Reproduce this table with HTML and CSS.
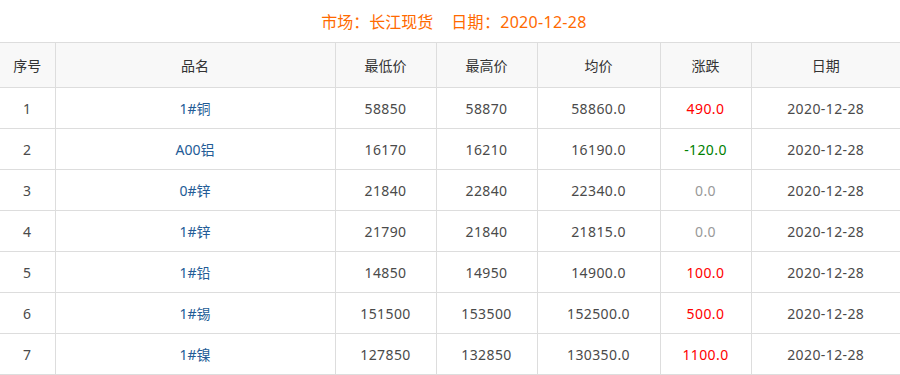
FILE: index.html
```html
<!DOCTYPE html>
<html lang="zh-CN">
<head>
<meta charset="utf-8">
<link rel="stylesheet" href="styles.css">
</head>
<body>
<div class="title"><span class="market">市场：长江现货</span><span class="date">日期：2020-12-28</span></div>
<table class="price-table">
  <colgroup>
    <col class="c1"><col class="c2"><col class="c3"><col class="c4"><col class="c5"><col class="c6"><col class="c7">
  </colgroup>
  <thead>
    <tr><th>序号</th><th>品名</th><th>最低价</th><th>最高价</th><th>均价</th><th>涨跌</th><th>日期</th></tr>
  </thead>
  <tbody>
    <tr><td>1</td><td class="name">1#铜</td><td>58850</td><td>58870</td><td>58860.0</td><td class="up">490.0</td><td>2020-12-28</td></tr>
    <tr><td>2</td><td class="name">A00铝</td><td>16170</td><td>16210</td><td>16190.0</td><td class="down">-120.0</td><td>2020-12-28</td></tr>
    <tr><td>3</td><td class="name">0#锌</td><td>21840</td><td>22840</td><td>22340.0</td><td class="flat">0.0</td><td>2020-12-28</td></tr>
    <tr><td>4</td><td class="name">1#锌</td><td>21790</td><td>21840</td><td>21815.0</td><td class="flat">0.0</td><td>2020-12-28</td></tr>
    <tr><td>5</td><td class="name">1#铅</td><td>14850</td><td>14950</td><td>14900.0</td><td class="up">100.0</td><td>2020-12-28</td></tr>
    <tr><td>6</td><td class="name">1#锡</td><td>151500</td><td>153500</td><td>152500.0</td><td class="up">500.0</td><td>2020-12-28</td></tr>
    <tr><td>7</td><td class="name">1#镍</td><td>127850</td><td>132850</td><td>130350.0</td><td class="up">1100.0</td><td>2020-12-28</td></tr>
  </tbody>
</table>
</body>
</html>
```

FILE: styles.css
```css
html, body {
  margin: 0;
  padding: 0;
  background: #fff;
}
body {
  font-family: "Noto Sans", "Noto Sans CJK SC", sans-serif;
  font-size: 14px;
  color: #4a4a4a;
}
.title {
  height: 42px;
  display: flex;
  justify-content: center;
  align-items: center;
  gap: 18px;
  padding-left: 8px;
  box-sizing: border-box;
  font-size: 16px;
  color: #ff6a00;
}
.title .date {
  letter-spacing: 0.3px;
}
.price-table {
  width: 900px;
  border-collapse: collapse;
  table-layout: fixed;
}
.c1 { width: 55px; }
.c2 { width: 280px; }
.c3 { width: 101px; }
.c4 { width: 101px; }
.c5 { width: 123px; }
.c6 { width: 91px; }
.c7 { width: 149px; }
.price-table th,
.price-table td {
  border: 1px solid #dddddd;
  text-align: center;
  padding: 0;
  font-weight: normal;
}
.price-table th:first-child,
.price-table td:first-child { border-left: none; }
.price-table th:last-child,
.price-table td:last-child { border-right: none; }
.price-table th {
  height: 44px;
  background: #f8f8f8;
  color: #333;
}
.price-table td {
  height: 40px;
  letter-spacing: 0.4px;
}
.price-table td.name { color: #235c96; letter-spacing: 0; }
.price-table td.up { color: #ff0000; }
.price-table td.down { color: #008000; }
.price-table td.flat { color: #999999; }
```
